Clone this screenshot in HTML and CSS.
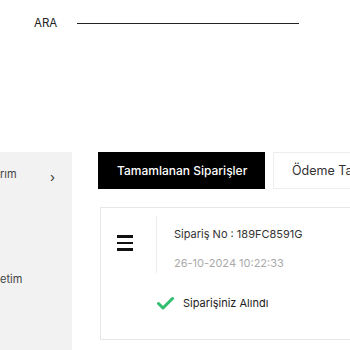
FILE: index.html
```html
<!DOCTYPE html>
<html lang="tr">
<head>
  <meta charset="UTF-8" />
  <meta name="viewport" content="width=device-width, initial-scale=1.0" />
  <title>Siparişlerim</title>
  <link rel="stylesheet" href="styles.css">
</head>
<body>
  <div class="header">
    <span class="search-label">ARA</span>
    <div class="search-line"></div>
  </div>

  <div class="layout">
    <div class="sidebar">
      <div class="side-item">
        <span>rım</span>
        <span class="chevron">&#8250;</span>
      </div>
      <div class="side-item side-item-last">
        <span>etim</span>
      </div>
    </div>

    <div class="main">
      <div class="tabs">
        <a href="#" class="tab tab-active">Tamamlanan Siparişler</a>
        <a href="#" class="tab">Ödeme Tamamlananlar</a>
      </div>

      <!-- Sipariş kartı -->
      <div class="order-card">
        <div class="order-top">
          <div class="order-icon">
            <span></span><span></span><span></span>
          </div>
          <div class="order-info">
            <p class="order-no">Sipariş No : 189FC8591G</p>
            <p class="order-date">26-10-2024 10:22:33</p>
          </div>
        </div>
        <div class="order-status">
          <svg width="17" height="13" viewBox="0 0 17 13">
            <path d="M1.5 6.5 L6 11 L15.5 1.5" fill="none" stroke="#2fbf6e" stroke-width="3" stroke-linecap="round" stroke-linejoin="round"/>
          </svg>
          <span>Siparişiniz Alındı</span>
        </div>
      </div>
    </div>
  </div>
</body>
</html>
```

FILE: styles.css
```css
* {
  margin: 0;
  padding: 0;
  box-sizing: border-box;
}

body, html {
  height: 100%;
  font-family: Inter, "Noto Sans", sans-serif;
  color: #222;
  overflow: hidden;
}

.header {
  display: flex;
  align-items: center;
  height: 46px;
  padding-left: 34px;
}

.search-label {
  font-size: 11.5px;
  font-weight: 400;
  color: #222;
}

.search-line {
  width: 222px;
  margin-left: 20px;
  border-bottom: 1.5px solid #222;
}

.layout {
  display: flex;
  gap: 26px;
  margin-top: 106px;
  height: 220px;
}

.sidebar {
  width: 72px;
  flex-shrink: 0;
  background: #f2f2f2;
  font-size: 11px;
  color: #444;
}

.side-item {
  display: flex;
  align-items: center;
  justify-content: space-between;
  padding: 1px 17px 0 0;
  height: 42px;
}

.side-item-last {
  margin-top: 63px;
}

.chevron {
  margin-top: 6px;
  font-size: 13px;
  color: #333;
}

.main {
  flex: 1;
  min-width: 600px;
}

.tabs {
  display: flex;
  gap: 8px;
}

.tab {
  display: flex;
  align-items: center;
  height: 37px;
  padding: 0 18px;
  font-size: 12.5px;
  text-decoration: none;
  color: #333;
  border: 1px solid #eee;
  background: white;
  white-space: nowrap;
}

.tab-active {
  width: 167px;
  background: #000;
  border-color: #000;
  color: white;
  font-size: 12px;
  font-weight: 500;
}

.order-card {
  margin: 18px 0 0 2px;
  width: 420px;
  height: 133px;
  border: 1px solid #e8e8e8;
}

.order-top {
  display: flex;
  margin-top: 8px;
}

.order-icon {
  width: 56px;
  height: 57px;
  border-right: 1.5px solid #ececec;
  display: flex;
  flex-direction: column;
  gap: 4px;
  padding: 19px 0 0 16px;
}

.order-icon span {
  display: block;
  width: 16px;
  height: 2.5px;
  background: #111;
}

.order-info {
  padding-left: 17px;
  font-size: 11px;
}

.order-no {
  margin-top: 11px;
  color: #333;
}

.order-date {
  margin-top: 15px;
  color: #aaa;
}

.order-status {
  display: flex;
  align-items: center;
  gap: 9px;
  margin: 23px 0 0 56px;
  font-size: 11px;
  color: #222;
}
```
